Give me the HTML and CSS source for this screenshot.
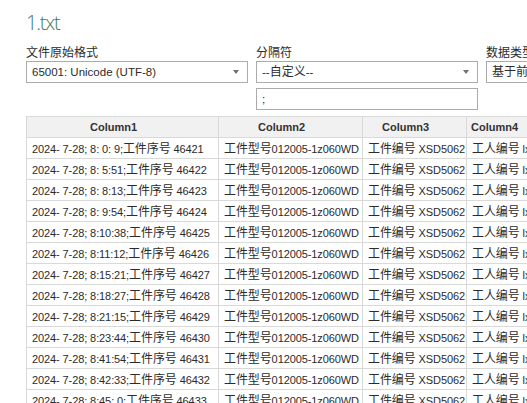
FILE: index.html
```html
<!DOCTYPE html>
<html lang="zh">
<head>
<meta charset="utf-8">
<title>1.txt</title>
<link rel="stylesheet" href="styles.css">
</head>
<body>
<div class="page">
  <h1 class="title">1.txt</h1>
  <div class="fields">
    <div class="field">
      <div class="label">文件原始格式</div>
      <div class="select"><span class="val">65001: Unicode (UTF-8)</span><span class="arrow"></span></div>
    </div>
    <div class="field">
      <div class="label">分隔符</div>
      <div class="select"><span class="val">--<span class="zh">自定义</span>--</span><span class="arrow"></span></div>
      <div class="input">;</div>
    </div>
    <div class="field">
      <div class="label">数据类型检测</div>
      <div class="select"><span class="val"><span class="zh">基于前</span> 200 <span class="zh">行</span></span><span class="arrow"></span></div>
    </div>
  </div>
  <table class="grid">
    <colgroup><col class="c1"><col class="c2"><col class="c3"><col class="c4"></colgroup>
    <thead>
      <tr><th>Column1</th><th>Column2</th><th>Column3</th><th class="h4">Column4</th></tr>
    </thead>
    <tbody>
      <tr><td>2024- 7-28; 8: 0: 9;<span class="zh">工件序号</span> 46421</td><td><span class="zh">工件型号</span>012005-1z060WD</td><td><span class="zh">工件编号</span> XSD5062</td><td><span class="zh">工人编号</span> lx001</td></tr>
      <tr><td>2024- 7-28; 8: 5:51;<span class="zh">工件序号</span> 46422</td><td><span class="zh">工件型号</span>012005-1z060WD</td><td><span class="zh">工件编号</span> XSD5062</td><td><span class="zh">工人编号</span> lx001</td></tr>
      <tr><td>2024- 7-28; 8: 8:13;<span class="zh">工件序号</span> 46423</td><td><span class="zh">工件型号</span>012005-1z060WD</td><td><span class="zh">工件编号</span> XSD5062</td><td><span class="zh">工人编号</span> lx001</td></tr>
      <tr><td>2024- 7-28; 8: 9:54;<span class="zh">工件序号</span> 46424</td><td><span class="zh">工件型号</span>012005-1z060WD</td><td><span class="zh">工件编号</span> XSD5062</td><td><span class="zh">工人编号</span> lx001</td></tr>
      <tr><td>2024- 7-28; 8:10:38;<span class="zh">工件序号</span> 46425</td><td><span class="zh">工件型号</span>012005-1z060WD</td><td><span class="zh">工件编号</span> XSD5062</td><td><span class="zh">工人编号</span> lx001</td></tr>
      <tr><td>2024- 7-28; 8:11:12;<span class="zh">工件序号</span> 46426</td><td><span class="zh">工件型号</span>012005-1z060WD</td><td><span class="zh">工件编号</span> XSD5062</td><td><span class="zh">工人编号</span> lx001</td></tr>
      <tr><td>2024- 7-28; 8:15:21;<span class="zh">工件序号</span> 46427</td><td><span class="zh">工件型号</span>012005-1z060WD</td><td><span class="zh">工件编号</span> XSD5062</td><td><span class="zh">工人编号</span> lx001</td></tr>
      <tr><td>2024- 7-28; 8:18:27;<span class="zh">工件序号</span> 46428</td><td><span class="zh">工件型号</span>012005-1z060WD</td><td><span class="zh">工件编号</span> XSD5062</td><td><span class="zh">工人编号</span> lx001</td></tr>
      <tr><td>2024- 7-28; 8:21:15;<span class="zh">工件序号</span> 46429</td><td><span class="zh">工件型号</span>012005-1z060WD</td><td><span class="zh">工件编号</span> XSD5062</td><td><span class="zh">工人编号</span> lx001</td></tr>
      <tr><td>2024- 7-28; 8:23:44;<span class="zh">工件序号</span> 46430</td><td><span class="zh">工件型号</span>012005-1z060WD</td><td><span class="zh">工件编号</span> XSD5062</td><td><span class="zh">工人编号</span> lx001</td></tr>
      <tr><td>2024- 7-28; 8:41:54;<span class="zh">工件序号</span> 46431</td><td><span class="zh">工件型号</span>012005-1z060WD</td><td><span class="zh">工件编号</span> XSD5062</td><td><span class="zh">工人编号</span> lx001</td></tr>
      <tr><td>2024- 7-28; 8:42:33;<span class="zh">工件序号</span> 46432</td><td><span class="zh">工件型号</span>012005-1z060WD</td><td><span class="zh">工件编号</span> XSD5062</td><td><span class="zh">工人编号</span> lx001</td></tr>
      <tr><td>2024- 7-28; 8:45: 0;<span class="zh">工件序号</span> 46433</td><td><span class="zh">工件型号</span>012005-1z060WD</td><td><span class="zh">工件编号</span> XSD5062</td><td><span class="zh">工人编号</span> lx001</td></tr>
    </tbody>
  </table>
</div>
</body>
</html>
```
FILE: styles.css
```css
html, body {
  margin: 0;
  padding: 0;
  background: #ffffff;
  overflow: hidden;
}
body {
  width: 527px;
  height: 403px;
  font-family: "Liberation Sans", "Noto Sans CJK SC", sans-serif;
  font-size: 11px;
  color: #2b2b2b;
}
.zh {
  font-family: "Noto Sans CJK SC", sans-serif;
  font-size: 12px;
  line-height: 16px;
}
.page {
  padding: 11px 0 0 26px;
  width: 700px;
}
.title {
  margin: 0;
  font-family: "Open Sans", "Noto Sans", sans-serif;
  font-weight: 300;
  font-size: 20px;
  line-height: 24px;
  color: #3d7b5b;
  letter-spacing: -1.2px;
}
.fields {
  display: flex;
  gap: 8px;
  margin-top: 9px;
}
.field {
  width: 222px;
  flex: none;
  display: flex;
  flex-direction: column;
}
.label {
  font-family: "Noto Sans CJK SC", sans-serif;
  font-size: 12px;
  line-height: 16px;
  height: 16px;
  color: #2b2b2b;
  margin-bottom: 1px;
}
.select, .input {
  box-sizing: border-box;
  height: 22px;
  border: 1px solid #ababab;
  display: flex;
  align-items: center;
  padding: 0 5px;
  color: #2b2b2b;
  line-height: 20px;
  font-size: 11.5px;
}
.val { flex: 1; white-space: nowrap; }
.arrow {
  width: 0;
  height: 0;
  border-left: 3.5px solid transparent;
  border-right: 3.5px solid transparent;
  border-top: 4px solid #707070;
  margin-right: 3px;
}
.input {
  margin-top: 5px;
}
.grid {
  margin-top: 6px;
  border-collapse: collapse;
  table-layout: fixed;
  width: 520px;
}
.c1 { width: 192px; }
.c2 { width: 144px; }
.c3 { width: 104px; }
.c4 { width: 80px; }
.grid tr { height: 21px; }
.grid th, .grid td {
  border: 1px solid #d9d9d9;
  height: 20px;
  padding: 0 0 0 5px;
  white-space: nowrap;
  overflow: hidden;
  line-height: 16px;
  box-sizing: border-box;
}
.grid th {
  background: #f1f1f1;
  font-weight: 700;
  text-align: center;
  padding: 0 18px 0 0;
  color: #333;
}
.grid th.h4 {
  text-align: left;
  padding-left: 4px;
}
.grid td {
  text-align: left;
  color: #2b2b2b;
  letter-spacing: -0.1px;
}
```
